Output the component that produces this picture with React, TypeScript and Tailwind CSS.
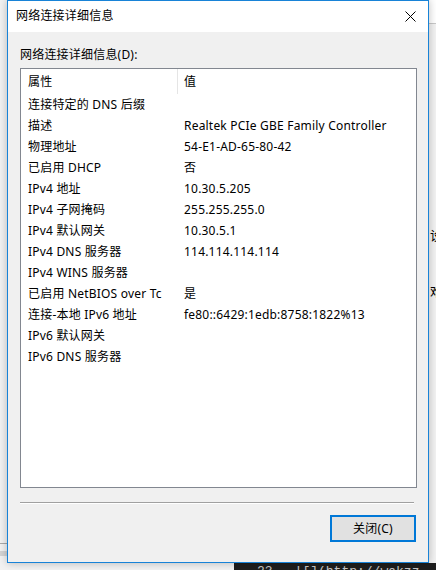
import React from 'react';

const rows: [string, string][] = [
  ['连接特定的 DNS 后缀', ''],
  ['描述', 'Realtek PCIe GBE Family Controller'],
  ['物理地址', '54-E1-AD-65-80-42'],
  ['已启用 DHCP', '否'],
  ['IPv4 地址', '10.30.5.205'],
  ['IPv4 子网掩码', '255.255.255.0'],
  ['IPv4 默认网关', '10.30.5.1'],
  ['IPv4 DNS 服务器', '114.114.114.114'],
  ['IPv4 WINS 服务器', ''],
  ['已启用 NetBIOS over Tc', '是'],
  ['连接-本地 IPv6 地址', 'fe80::6429:1edb:8758:1822%13'],
  ['IPv6 默认网关', ''],
  ['IPv6 DNS 服务器', ''],
];

const font = { fontFamily: '"Noto Sans", "Noto Sans CJK SC", sans-serif' };

export default function App() {
  return (
    <div className="relative w-[436px] h-[570px] overflow-hidden bg-[#f2f2f2] text-[12px] tracking-[0.2px] text-black" style={font}>
      {/* desktop stuff peeking out behind the dialog */}
      <div className="absolute left-0 top-[543px] w-[8px] h-px bg-[#a8a8a8]" />
      <div className="absolute left-0 top-[551px] w-[8px] h-[5px] bg-[#d4d4d4]" />
      <div className="absolute left-[429px] top-0 w-[7px] h-[24px] bg-white" />
      <div className="absolute left-[429px] top-[23px] w-[7px] h-px bg-[#c8c8c8]" />
      <div className="absolute left-[430px] top-[229px] text-[13px] leading-none">设</div>
      <div className="absolute left-[430px] top-[285px] text-[13px] leading-none">难</div>
      <div className="absolute left-[234px] top-[563px] w-[202px] h-[7px] bg-[#1e1e1e] overflow-hidden">
        <div className="flex font-['Liberation_Mono',monospace] text-[13px] leading-none tracking-normal text-[#c8c8c8] mt-[2px]">
          <span className="ml-[23px]">23</span>
          <span className="ml-[22px]">![](http://wakzz-img</span>
        </div>
      </div>

      {/* dialog window */}
      <div className="absolute left-[7px] top-0 w-[422px] h-[563px] flex flex-col border border-[#1883d7] bg-[#f0f0f0] shadow-[0_0_8px_rgba(0,0,0,0.25)]">
        <div className="h-[31px] bg-white flex items-center justify-between pl-[8px] pr-[10px] shrink-0">
          <span className="-mt-px">网络连接详细信息</span>
          <svg width="11" height="11" viewBox="0 0 11 11" className="mr-[2px]">
            <path d="M0.5 0.5 L10.5 10.5 M10.5 0.5 L0.5 10.5" stroke="#000" strokeWidth="1" fill="none" />
          </svg>
        </div>

        <div className="flex flex-col px-[12px] pt-[14px]">
          <div className="leading-[18px]">网络连接详细信息(D):</div>
          <div className="mt-[4px] h-[420px] w-[397px] border border-[#828790] bg-white">
            <div className="flex h-[25px] items-center">
              <div className="w-[157px] h-full pl-[7px] flex items-center border-r border-[#e5e5e5]">属性</div>
              <div className="pl-[6px]">值</div>
            </div>
            {rows.map(([k, v]) => (
              <div key={k} className="flex h-[21px] items-center whitespace-nowrap">
                <div className="w-[157px] pl-[7px] overflow-hidden">{k}</div>
                <div className="pl-[6px]">{v}</div>
              </div>
            ))}
          </div>
          <div className="mt-[14px] w-[394px] border-t border-[#a0a0a0] border-b border-b-white" />
          <div className="flex justify-end mt-[11px]">
            <button className="w-[86px] h-[27px] border-2 border-[#0078d7] bg-[#e1e1e1] flex items-center justify-center">
              关闭(C)
            </button>
          </div>
        </div>
      </div>
    </div>
  );
}
